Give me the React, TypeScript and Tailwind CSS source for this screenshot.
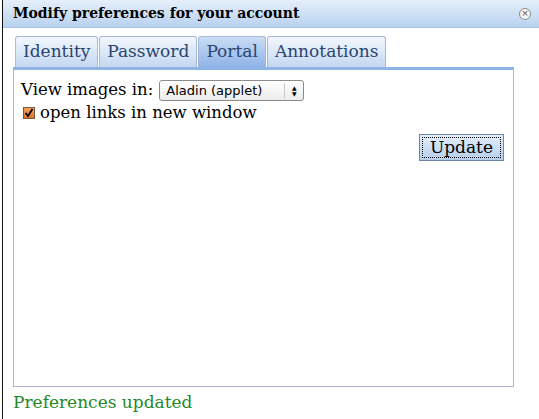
import React from 'react';

const serif = { fontFamily: '"DejaVu Serif", serif' };

function Tab({ label, active }: { label: string; active?: boolean }) {
  return (
    <div
      className={`h-[31px] px-[7px] flex items-center rounded-t-[3px] border border-b-0 border-[#a6b9d8] text-[17px] text-[#2a4470] ${
        active ? 'bg-gradient-to-b from-[#c9dcf4] to-[#8fb3e6]' : 'bg-gradient-to-b from-[#f2f7fd] to-[#c4d8f1]'
      }`}
    >
      {label}
    </div>
  );
}

export default function App() {
  return (
    <div className="w-[539px] h-[419px] bg-white flex overflow-hidden" style={serif}>
      <div className="w-[2px]" />
      <div className="w-[1px] bg-[#111]" />
      <div className="flex-1 flex flex-col">
        <div className="h-[28px] flex items-center justify-between pl-[10px] pr-[8px] border-b border-[#a9c3e3] bg-gradient-to-b from-[#e6effa] to-[#b8d2ef]">
          <span className="font-bold text-[14px] text-black">Modify preferences for your account</span>
          <span className="w-[12px] h-[12px] rounded-full border border-[#8a8a8a] bg-[#f4f4f4] flex items-center justify-center text-[9px] leading-none text-[#555]" style={{ fontFamily: '"DejaVu Sans", sans-serif' }}>
            ×
          </span>
        </div>
        <div className="pl-[10px] pt-[8px] flex flex-col">
          <div className="flex gap-[1px] pl-[2px]">
            <Tab label="Identity" />
            <Tab label="Password" />
            <Tab label="Portal" active />
            <Tab label="Annotations" />
          </div>
          <div className="w-[501px] h-[320px] border border-[#aab4dc] border-t-[3px] border-t-[#8fb3e6] px-[7px] pt-[9px]">
            <div className="h-[23px] flex items-center gap-[6px] text-[16.5px] text-black">
              <span>View images in:</span>
              <div
                className="w-[145px] h-[21px] border border-[#8b8b8b] rounded-[3px] bg-gradient-to-b from-white to-[#ececec] flex items-center text-[13px] pl-[6px]"
                style={{ fontFamily: '"DejaVu Sans", sans-serif' }}
              >
                <span className="flex-1">Aladin (applet)</span>
                <span className="w-[1px] h-[15px] bg-[#c8c8c8]" />
                <span className="w-[18px] flex flex-col items-center justify-center text-[6px] leading-[6px] text-black">
                  <span>▲</span>
                  <span>▼</span>
                </span>
              </div>
            </div>
            <div className="h-[22px] flex items-center gap-[5px] pl-[2px] text-[16.5px] text-black">
              <span className="w-[12px] h-[12px] border border-[#7a5a3a] bg-gradient-to-b from-[#f7a25a] to-[#e0702a] flex items-center justify-center">
                <svg width="10" height="10" viewBox="0 0 10 10">
                  <path d="M1.5 5 L4 8 L8.5 1" stroke="#000" strokeWidth="1.8" fill="none" />
                </svg>
              </span>
              <span>open links in new window</span>
            </div>
            <div className="flex justify-end mt-[10px] pr-[2px]">
              <div className="h-[27px] px-[2px] border border-[#6e86ad] bg-gradient-to-b from-[#e3eefb] to-[#b5cdeb] flex items-center">
                <span className="px-[7px] h-[21px] flex items-center border border-dotted border-black text-[17px] text-black">Update</span>
              </div>
            </div>
          </div>
          <div className="mt-[3px] text-[17px] text-[#1f8a1f]">Preferences updated</div>
        </div>
      </div>
    </div>
  );
}
